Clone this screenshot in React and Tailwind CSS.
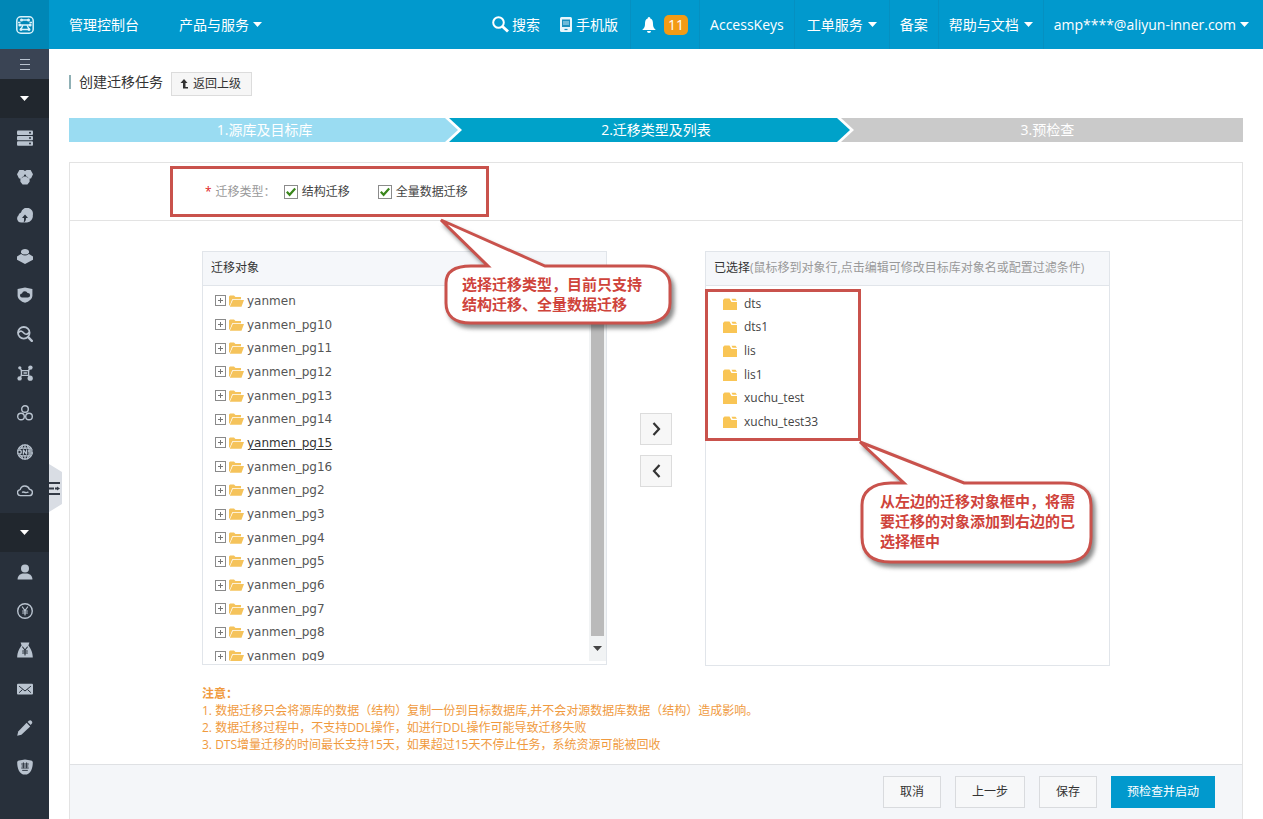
import React, { useState } from "react";
import clsx from "clsx";

const SOURCE_NAMES = [
  "yanmen",
  "yanmen_pg10",
  "yanmen_pg11",
  "yanmen_pg12",
  "yanmen_pg13",
  "yanmen_pg14",
  "yanmen_pg15",
  "yanmen_pg16",
  "yanmen_pg2",
  "yanmen_pg3",
  "yanmen_pg4",
  "yanmen_pg5",
  "yanmen_pg6",
  "yanmen_pg7",
  "yanmen_pg8",
  "yanmen_pg9",
];

const SELECTED_NAMES = ["dts", "dts1", "lis", "lis1", "xuchu_test", "xuchu_test33"];

const NOTES = [
  "1. 数据迁移只会将源库的数据（结构）复制一份到目标数据库,并不会对源数据库数据（结构）造成影响。",
  "2. 数据迁移过程中，不支持DDL操作，如进行DDL操作可能导致迁移失败",
  "3. DTS增量迁移的时间最长支持15天，如果超过15天不停止任务，系统资源可能被回收",
];

const Caret = () => (
  <svg viewBox="0 0 9 5" className="h-[5px] w-[9px] shrink-0" fill="currentColor">
    <path d="M0 0h9L4.5 5z" />
  </svg>
);

const Icon = ({ children }) => (
  <svg
    viewBox="0 0 16 16"
    className="size-4"
    fill="none"
    stroke="currentColor"
    strokeWidth="1.4"
    strokeLinecap="round"
    strokeLinejoin="round"
  >
    {children}
  </svg>
);

const SHADE = "#28303b";

const PRODUCT_ICONS = [
  {
    label: "云服务器",
    icon: (
      <g fill="currentColor" stroke="none">
        <rect y="0.5" width="16" height="4.4" rx="1" />
        <rect y="5.9" width="16" height="4.4" rx="1" />
        <rect y="11.3" width="16" height="4.4" rx="1" />
        <g fill={SHADE}>
          <circle cx="13" cy="2.7" r="1" />
          <circle cx="13" cy="8.1" r="1" />
          <circle cx="13" cy="13.5" r="1" />
        </g>
      </g>
    ),
  },
  {
    label: "云数据库",
    icon: (
      <g fill="currentColor" stroke="none">
        <path d="M2.4 1h4L8 2l1.6-1h4L16 5.2l-2 4.2h-1.4v3.4L10.400 15.500H5.600L3.400 12.800V9.400H2L0 5.200z" />
        <circle cx="8" cy="6.6" r="1.100" fill={SHADE} />
        <path d="M5 8.600 8 6.600l3 2" stroke={SHADE} strokeWidth="0.5" fill="none" />
      </g>
    ),
  },
  {
    label: "对象存储",
    icon: (
      <g stroke="none">
        <path
          fill="currentColor"
          d="M4 14.5A4 4 0 0 1 1.4 7.6 3.6 3.6 0 0 1 4 4.4a6 6 0 0 1 11.8 2.8A6.4 6.4 0 0 1 10 14.5z"
        />
        <path fill={SHADE} d="M8 6.4 11 10H9c0 2-.5 3.500-2.500 4.500C7.200 13 7 12 7 10H5z" />
      </g>
    ),
  },
  {
    label: "内容分发",
    icon: (
      <g stroke="none">
        <path fill="currentColor" d="M0 8.4 4 6V3.6C4 2 6 1 8 1s4 1 4 2.6V6l4 2.4v3.4L8 16l-8-4.2z" />
        <path d="M4 5.400c1 2.200 7 2.200 8 0" stroke={SHADE} fill="none" strokeWidth="1" />
      </g>
    ),
  },
  {
    label: "云盾",
    icon: (
      <g stroke="none">
        <path fill="currentColor" d="M8 .5 15.4 2v6.4c0 3.4-3.4 6-7.4 7.4-4-1.400-7.400-4-7.400-7.400V2z" />
        <path fill={SHADE} d="M5.2 10.600a2.100 2.100 0 0 1-.2-4.200A3 3 0 0 1 10.600 6a2.300 2.300 0 0 1 .4 4.600z" />
      </g>
    ),
  },
  {
    label: "云监控",
    icon: (
      <g>
        <circle cx="6.8" cy="6.8" r="5.800" strokeWidth="1.800" />
        <path d="m11.200 11.200 3.600 3.600" strokeWidth="2.4" />
        <path d="M1.600 6.600c2-2.600 4-1 5.200.4s3.200 2 5.200-.4" strokeWidth="1.700" />
      </g>
    ),
  },
  {
    label: "专有网络",
    icon: (
      <g>
        <path d="M3 3c2 1.600 2 8.400 0 10M13 3c-2 1.600-2 8.400 0 10M4.400 5.600h7M4.400 10.400h7M7 8h2.500" />
        <g fill="currentColor" stroke="none">
          <circle cx="2.600" cy="13.400" r="2.200" />
          <circle cx="13.400" cy="2.600" r="2.200" />
          <circle cx="13.200" cy="13.200" r="2.600" />
          <circle cx="2.800" cy="2.800" r="1.600" />
        </g>
      </g>
    ),
  },
  {
    label: "负载均衡",
    icon: (
      <g>
        <circle cx="8" cy="4" r="3.300" />
        <circle cx="4" cy="11.500" r="3.300" />
        <circle cx="12" cy="11.500" r="3.300" />
      </g>
    ),
  },
  {
    label: "云解析",
    icon: (
      <g strokeWidth="1.300">
        <circle cx="8" cy="8" r="7.200" />
        <path d="M8 .8v14.400M5.800 1.200 4 5M10.200 1.200 12 5M5.800 14.800 4 11M10.200 14.800 12 11M2 4.200h12M2 11.800h12" />
        <path d="M0 5h16v6H0z" fill={SHADE} stroke="none" />
        <path d="M.8 6h2.400l1 1v2l-1 1H.800zM6.400 10V6l3.200 4V6M15.200 6h-3.400v2h3.400v2h-3.400" />
      </g>
    ),
  },
  {
    label: "云市场",
    icon: (
      <g>
        <path d="M3.800 12.600a3 3 0 0 1-.6-6 4.800 4.800 0 0 1 9.200-.4 3.200 3.200 0 0 1-.4 6.400z" />
        <path d="M5.500 9.200c1.500-1 2.500 1.400 5.500 0" />
      </g>
    ),
  },
];

const ACCOUNT_ICONS = [
  {
    label: "用户中心",
    icon: (
      <g fill="currentColor" stroke="none">
        <circle cx="8" cy="4.600" r="4" />
        <path d="M.6 15.600c0-4 2.600-5.400 5-6h4.800c2.400.6 5 2 5 6z" />
      </g>
    ),
  },
  {
    label: "费用中心",
    icon: (
      <g>
        <circle cx="8" cy="8" r="7.300" />
        <path d="m5.400 4 2.600 3.600L10.600 4M8 7.600V12M5.600 8h4.800M5.600 10h4.800" strokeWidth="1.200" />
      </g>
    ),
  },
  {
    label: "资金管理",
    icon: (
      <g>
        <path
          fill="currentColor"
          stroke="none"
          d="M3.600.4h8.800l-1 3C13.400 6 15.800 10 15.800 15.600H.2C.2 10 2.600 6 4.600 3.400z"
        />
        <path d="m5.600 5 2.400 3 2.400-3M8 8v5M5.600 9h4.800M5.600 11h4.800" stroke={SHADE} strokeWidth="1.100" />
      </g>
    ),
  },
  {
    label: "消息中心",
    icon: (
      <g>
        <rect y="2.800" width="16" height="10.800" rx="1" fill="currentColor" stroke="none" />
        <path d="M2.400 5.400 8 10l5.600-4.600M2.400 11.400l2.800-2.600M13.600 11.400l-2.800-2.600" stroke={SHADE} strokeWidth="1" />
      </g>
    ),
  },
  {
    label: "工单管理",
    icon: (
      <g fill="currentColor" stroke="none">
        <path d="m9.600 2.800 3.600 3.600L4.400 14.800.2 15.800 1.200 11.400z" />
        <path d="m10.600 1.900 1.200-1.100c1-.9 2-.7 2.800.1s1 1.900.1 2.800l-1 1.300z" />
      </g>
    ),
  },
  {
    label: "备案管理",
    icon: (
      <g>
        <path
          fill="currentColor"
          stroke="none"
          d="M2 1.400 8 .400l6 1c1.200.2 1.800 1 1.800 2 0 5.600-2 12.200-7.800 12.200S.2 9 .2 3.400c0-1 .6-1.800 1.800-2z"
        />
        <path d="M4.600 5h6.800M5 7h6M4.600 9h6.800M5.600 11.400h4.800M6.400 3.800v5M9.600 3.800v5" stroke={SHADE} strokeWidth="0.900" />
      </g>
    ),
  },
];

const OpenFolder = () => (
  <svg viewBox="0 0 15 12" className="h-3 w-[15px] shrink-0" fill="#f5c35b">
    <path d="M0 10.500V1.500L1 .5h4l1.500 1.500H12v2.300H3.200L.8 10.500z" />
    <path d="M3.800 4.900H15l-2.500 6.800H.800z" />
  </svg>
);

const ClosedFolder = () => (
  <svg viewBox="0 0 14 12" className="h-3 w-3.5 shrink-0" fill="#f9c555">
    <path d="M0 12V2L1.500.5h5L8.500 4H14v8z" />
    <path d="M8.500.8h4L14 2.800H9.500z" />
  </svg>
);

const PlusBox = () => (
  <svg viewBox="0 0 11 11" className="size-[11px]" fill="none" stroke="#8a8a8a">
    <rect x="0.5" y="0.5" width="10" height="10" />
    <path d="M3 5.500h5M5.500 3v5" stroke="#777" />
  </svg>
);

const SideGroup = ({ items, className }) => (
  <ul className={clsx("flex shrink-0 flex-col pb-0.5", className)}>
    {items.map((item) => (
      <li key={item.label} className="flex flex-1 items-center justify-center">
        <a href="#" aria-label={item.label}>
          <Icon>{item.icon}</Icon>
        </a>
      </li>
    ))}
  </ul>
);

const Sidebar = () => (
  <nav className="relative w-[49px] shrink-0 bg-[#28303b] text-[#b9c3cf]">
    <button aria-label="菜单" className="flex h-[30px] w-full items-center justify-center bg-[#3a4454]">
      <svg viewBox="0 0 10 11" className="h-[11px] w-2.5" stroke="currentColor">
        <path d="M0 .5h10M0 5.500h10M0 10.500h10" />
      </svg>
    </button>
    <button aria-label="产品与服务" className="flex h-[39px] w-full items-center justify-center bg-[#21272e] text-white">
      <Caret />
    </button>
    <SideGroup items={PRODUCT_ICONS} className="h-[395px]" />
    <button aria-label="用户中心" className="flex h-[39px] w-full items-center justify-center bg-[#21272e] text-white">
      <Caret />
    </button>
    <SideGroup items={ACCOUNT_ICONS} className="h-[236px]" />

    {/* handle that slides the sub menu out */}
    <button aria-label="展开" className="absolute top-[415px] left-full">
      <svg viewBox="0 0 13 48" className="h-12 w-[13px]">
        <path d="M0 0 13 8v32L0 48z" fill="#d9dde4" />
        <path d="M0 19h11M0 24.500h5M0 30h11" stroke="#333a45" strokeWidth="2" />
        <path d="M6 24.500h2" stroke="#333a45" strokeWidth="2" />
        <path d="M8 22.500 11 24.500 8 26.500z" fill="#333a45" />
      </svg>
    </button>
  </nav>
);

const TopItem = ({ children, className = "px-2.5" }) => (
  <a href="#" className={clsx("flex h-full items-center border-l border-[#0590c1]", className)}>
    {children}
  </a>
);

const TopBar = () => (
  <header className="flex h-[49px] items-center bg-[#0199cd] text-sm whitespace-nowrap text-white">
    <a href="#" aria-label="首页" className="flex h-full w-[49px] items-center justify-center bg-[#0087b6]">
      <svg viewBox="0 0 18 18" className="size-[18px]" fill="none" stroke="#d9f2fb" strokeWidth="1.500">
        <rect x="0.800" y="0.800" width="16.400" height="16.400" rx="4" />
        <path d="M5.500 4h7M4 9h10M7 9 4.800 13.500h8.400L11 9M2 6.500h2.500M13.500 6.500H16" />
        <g fill="#d9f2fb" stroke="none">
          <circle cx="5.500" cy="4" r="1.500" />
          <circle cx="12.500" cy="4" r="1.500" />
          <circle cx="3.800" cy="9" r="1.500" />
          <circle cx="14.200" cy="9" r="1.500" />
          <circle cx="5" cy="13.500" r="1.400" />
          <circle cx="13" cy="13.500" r="1.400" />
        </g>
      </svg>
    </a>
    <a href="#" className="flex h-full items-center px-5">
      管理控制台
    </a>
    <button className="flex h-full items-center gap-1 px-5">
      产品与服务
      <Caret />
    </button>

    <div className="ml-auto flex h-full items-center">
      <button className="flex items-center gap-[3px]">
        <svg viewBox="0 0 17 17" className="size-[17px]" fill="none" stroke="currentColor">
          <circle cx="6.500" cy="6.500" r="5.300" strokeWidth="2" />
          <path d="m10.500 10.500 5.500 5" strokeWidth="3" />
        </svg>
        搜索
      </button>
      <a href="#" className="mr-3 ml-5 flex items-center gap-1">
        <svg viewBox="0 0 12 15" className="h-[15px] w-3">
          <rect width="12" height="15" rx="1.500" fill="#e6f6fc" />
          <rect x="2" y="2.500" width="8" height="7.500" fill="#1b8fbd" />
          <path d="M3 5h6M3 7h6" stroke="#bfe5f3" />
          <path d="M4.500 12.500h3" stroke="#1b8fbd" strokeWidth="1.200" />
        </svg>
        手机版
      </a>
      <TopItem className="gap-2 px-[11px]">
        <svg viewBox="0 0 14 16" className="h-4 w-3.5" fill="currentColor">
          <path d="M7 0c1 0 1.300.8 1.300 1.500C10.600 2.300 11 4.500 11 7c0 3 1 4.500 2.800 6H.2C2 11.500 3 10 3 7c0-2.500.4-4.700 2.700-5.500C5.700.8 6 0 7 0z" />
          <path d="M5 14h4a2 2 0 0 1-4 0z" />
        </svg>
        <span className="rounded-[5px] bg-[#f39b14] px-1 leading-5">11</span>
      </TopItem>
      <TopItem>AccessKeys</TopItem>
      <TopItem className="gap-[5px] px-3">
        工单服务
        <Caret />
      </TopItem>
      <TopItem>备案</TopItem>
      <TopItem className="gap-[5px] px-2.5">
        帮助与文档
        <Caret />
      </TopItem>
      <TopItem className="gap-1 pr-3.5 pl-2.5">
        amp****@aliyun-inner.com
        <Caret />
      </TopItem>
    </div>
  </header>
);

const StepArrow = ({ from, to }) => (
  <svg viewBox="0 0 18 24" className="absolute top-0 -right-0.5 z-10 h-6 w-[18px]">
    <rect width="18" height="24" fill={to} />
    <path d="M0 0h5l13 12L5 24H0z" fill="#fff" />
    <path d="M0 0h1l13 12L1 24H0z" fill={from} />
  </svg>
);

const Steps = () => (
  <ol className="mt-[22px] grid grid-cols-3 text-center text-sm leading-6 text-white">
    <li className="relative bg-[#9adcf2]">
      1.源库及目标库
      <StepArrow from="#9adcf2" to="#00a2c9" />
    </li>
    <li className="relative bg-[#00a2c9]">
      2.迁移类型及列表
      <StepArrow from="#00a2c9" to="#cacaca" />
    </li>
    <li className="bg-[#cacaca]">3.预检查</li>
  </ol>
);

const Check = ({ label }) => {
  const [checked, setChecked] = useState(true);

  return (
    <label className="flex items-center gap-1 text-[#444]">
      <span className="grid size-3.5 place-items-center border border-[#8b8b8b] bg-white">
        <input
          type="checkbox"
          checked={checked}
          onChange={(e) => setChecked(e.target.checked)}
          className="col-start-1 row-start-1 size-3 appearance-none"
        />
        {checked && (
          <svg
            viewBox="0 0 10 10"
            className="pointer-events-none col-start-1 row-start-1 size-2.5"
            fill="none"
            stroke="#3a861c"
            strokeWidth="2.200"
          >
            <path d="m.8 4.800 2.800 3L9.200 1.500" />
          </svg>
        )}
      </span>
      {label}
    </label>
  );
};

const CALLOUT_TEXT = "absolute left-[25px] text-[15px] leading-5 font-bold whitespace-nowrap text-[#cf433b]";

const TypeCallout = () => (
  <div className="absolute top-12 left-[264px] z-20 h-[115px] w-[240px]">
    <svg viewBox="0 0 240 115" className="h-[115px] w-[240px] drop-shadow-[3px_4px_2px_rgba(60,60,60,0.6)]">
      <path
        d="M4 3 51 49H34C16 49 9 56 9 66v20c0 12 8 20 25 20h173c18 0 26-9 26-20V68c0-11-9-19-26-19h-99z"
        fill="#fff"
        stroke="#c9524c"
        strokeWidth="3"
      />
    </svg>
    <p className={clsx(CALLOUT_TEXT, "top-[57px]")}>
      选择迁移类型，目前只支持
      <br />
      结构迁移、全量数据迁移
    </p>
  </div>
);

const ListCallout = () => (
  <div className="absolute top-[147px] left-[147px] z-20 h-[132px] w-[246px]">
    <svg viewBox="0 0 246 132" className="h-[132px] w-[246px] drop-shadow-[3px_4px_2px_rgba(60,60,60,0.6)]">
      <path
        d="M5 3 49 44H36C16 44 7 54 7 66v32c0 16 9 25 29 25h172c20 0 28-9 28-25V66c0-14-8-22-28-22h-99z"
        fill="#fff"
        stroke="#c9524c"
        strokeWidth="3"
      />
    </svg>
    <p className={clsx(CALLOUT_TEXT, "top-[52px]")}>
      从左边的迁移对象框中，将需
      <br />
      要迁移的对象添加到右边的已
      <br />
      选择框中
    </p>
  </div>
);

const TypeRow = () => (
  <div className="border-b border-[#e3e3e3] pt-[3px] pb-[3px] pl-[100px]">
    <div className="relative flex h-[51px] w-[319px] items-center border-3 border-[#c9524c] pl-8 text-xs">
      <span className="mr-1 text-[#e02020]">*</span>
      <span className="mr-2 text-[#999]">迁移类型：</span>
      <div className="flex gap-7">
        <Check label="结构迁移" />
        <Check label="全量数据迁移" />
      </div>
      <TypeCallout />
    </div>
  </div>
);

const SourcePanel = () => (
  <section className="h-[414px] w-[405px] border border-[#e1e5ea] text-xs">
    <h2 className="h-[34px] border-b border-[#e1e5ea] bg-[#f5f7fa] px-2 leading-8 text-[#333]">迁移对象</h2>
    <div className="flex h-[375px] overflow-hidden">
      <ul className="mt-[3px] grid h-[379px] flex-1 auto-rows-fr pl-3 font-['DejaVu_Sans',sans-serif] text-[#555]">
        {SOURCE_NAMES.map((name) => (
          <li key={name} className="flex items-center">
            <button aria-label={`展开 ${name}`} className="mr-[3px]">
              <PlusBox />
            </button>
            <OpenFolder />
            <a
              href="#"
              className={clsx(
                "ml-[3px] leading-5",
                name === "yanmen_pg15" && "text-[#333] underline underline-offset-2"
              )}
            >
              {name}
            </a>
          </li>
        ))}
      </ul>
      {/* scroll bar */}
      <div className="flex w-[17px] flex-col items-center bg-[#f1f3f4] text-[#444]">
        <div className="h-6 w-full" />
        <div className="w-[13px] flex-1 bg-[#bababa]" />
        <div className="flex h-[25px] items-center">
          <Caret />
        </div>
      </div>
    </div>
  </section>
);

const SelectedPanel = () => (
  <section className="h-[415px] w-[405px] border border-[#e1e5ea] text-xs">
    <h2 className="h-[34px] border-b border-[#e1e5ea] bg-[#f5f7fa] px-2 leading-8 whitespace-nowrap text-[#333]">
      已选择<span className="text-[#999]">(鼠标移到对象行,点击编辑可修改目标库对象名或配置过滤条件)</span>
    </h2>
    <div className="relative mt-[3px] -ml-px h-[152px] w-[156px] border-3 border-[#c9524c]">
      <ul className="grid h-[142px] auto-rows-fr pl-[15px] text-[#444]">
        {SELECTED_NAMES.map((name) => (
          <li key={name} className="flex items-center gap-[7px] leading-5">
            <ClosedFolder />
            {name}
          </li>
        ))}
      </ul>
      <ListCallout />
    </div>
  </section>
);

const MoveButton = ({ label, d }) => (
  <button
    aria-label={label}
    className="flex size-8 items-center justify-center border border-[#dcdcdc] bg-[#f7f7f7]"
  >
    <svg viewBox="0 0 9 14" className="h-3.5 w-[9px]" fill="none" stroke="#333" strokeWidth="2.200">
      <path d={d} />
    </svg>
  </button>
);

const Transfer = () => (
  <div className="flex items-start justify-center pt-[30px]">
    <SourcePanel />
    <div className="flex w-[98px] flex-col items-center gap-2.5 pt-[162px]">
      <MoveButton label="添加" d="m1.500 1 5.500 6-5.500 6" />
      <MoveButton label="移除" d="M7.500 1 2 7l5.500 6" />
    </div>
    <SelectedPanel />
  </div>
);

const PLAIN_BUTTON = "h-8 border border-[#d9dbde] bg-[#f7f8f9] px-4 text-[#333]";

const App = () => {
  return (
    <div className="flex min-h-screen flex-col bg-white font-['Open_Sans','Noto_Sans_CJK_SC',sans-serif]">
      <TopBar />
      <div className="flex flex-1">
        <Sidebar />
        <main className="flex min-w-0 flex-1 flex-col px-5 pt-[23px]">
          <div className="flex items-start">
            <h1 className="mt-[3px] border-l-2 border-[#8fb0b5] pl-2 text-sm leading-3.5 text-[#333]">创建迁移任务</h1>
            <a
              href="#"
              className="ml-2 flex h-6 items-center gap-1 border border-[#dcdcdc] bg-[#f6f6f6] pr-2.5 pl-2 text-xs text-[#333]"
            >
              <svg viewBox="0 0 9 10" className="h-2.5 w-[9px]" fill="#333">
                <path d="M4 0 7.500 4h-2v4H8v1.500H3V4H.5z" />
              </svg>
              返回上级
            </a>
          </div>

          <Steps />

          <div className="mt-5 flex flex-1 flex-col border border-b-0 border-[#e3e3e3]">
            <TypeRow />
            <Transfer />
            <div className="mx-auto w-[908px] pt-[19px] pb-[11px] text-xs leading-[17px] text-[#f09a3e]">
              <h3 className="font-bold">注意：</h3>
              {NOTES.map((note) => (
                <p key={note}>{note}</p>
              ))}
            </div>
            <footer className="flex flex-1 items-start justify-end gap-3.5 border-t border-[#dfe1e4] bg-[#f4f6f9] pt-[11px] pr-[27px] text-xs">
              <button className={PLAIN_BUTTON}>取消</button>
              <button className={PLAIN_BUTTON}>上一步</button>
              <button className={PLAIN_BUTTON}>保存</button>
              <button className="h-8 bg-[#0199cd] px-4 text-white">预检查并启动</button>
            </footer>
          </div>
        </main>
      </div>
    </div>
  );
};

export default App;
